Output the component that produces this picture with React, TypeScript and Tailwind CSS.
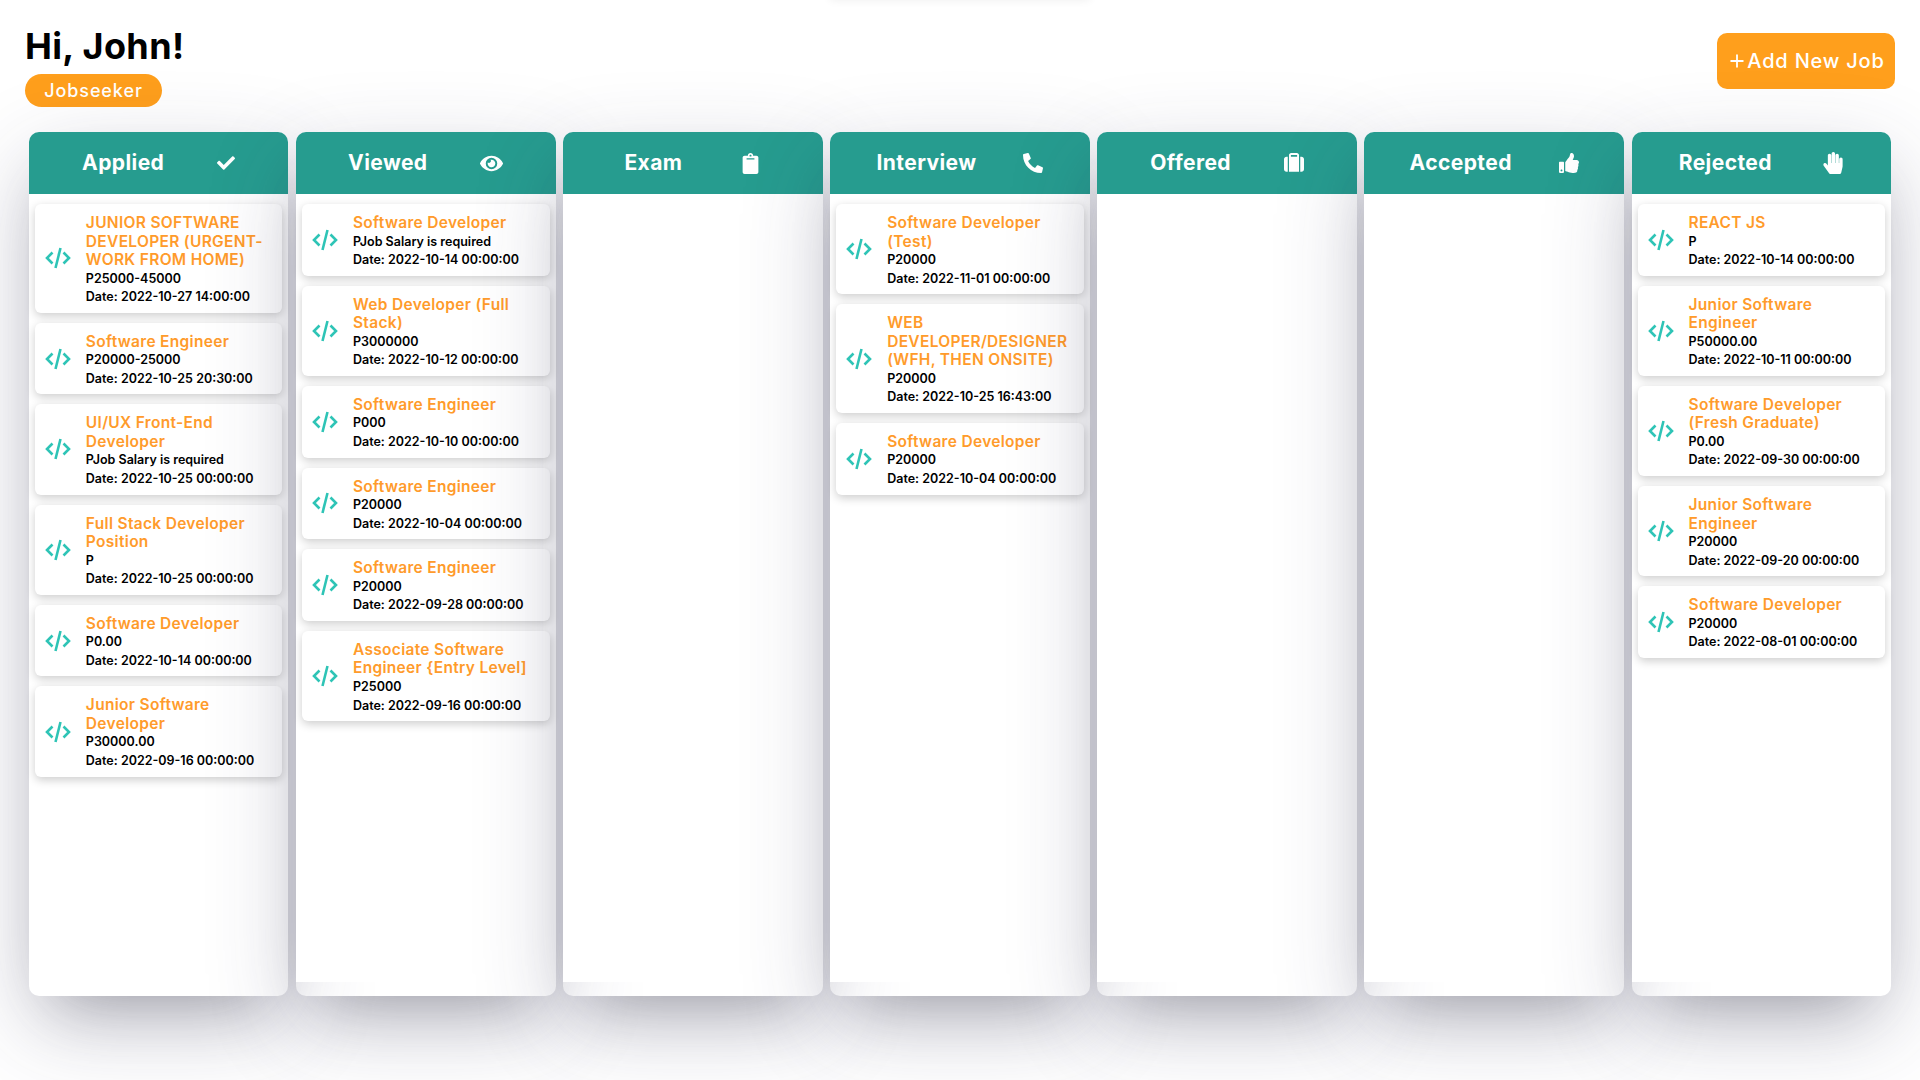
import React from 'react'
import { FaCheck, FaEye, FaClipboard, FaPhone, FaThumbsUp, FaHandPaper } from 'react-icons/fa'
import { FaSuitcase } from 'react-icons/fa6'
import { Plus } from 'lucide-react'

type Job = { title: string; salary: string; date: string }

const columns: { name: string; gap: string; icon: React.ReactNode; jobs: Job[] }[] = [
  {
    name: 'Applied',
    gap: 'gap-[53px]',
    icon: <FaCheck size={18} />,
    jobs: [
      { title: 'JUNIOR SOFTWARE DEVELOPER (URGENT- WORK FROM HOME)', salary: 'P25000-45000', date: '2022-10-27 14:00:00' },
      { title: 'Software Engineer', salary: 'P20000-25000', date: '2022-10-25 20:30:00' },
      { title: 'UI/UX Front-End Developer', salary: 'PJob Salary is required', date: '2022-10-25 00:00:00' },
      { title: 'Full Stack Developer Position', salary: 'P', date: '2022-10-25 00:00:00' },
      { title: 'Software Developer', salary: 'P0.00', date: '2022-10-14 00:00:00' },
      { title: 'Junior Software Developer', salary: 'P30000.00', date: '2022-09-16 00:00:00' },
    ],
  },
  {
    name: 'Viewed',
    gap: 'gap-[53px]',
    icon: <FaEye size={23} />,
    jobs: [
      { title: 'Software Developer', salary: 'PJob Salary is required', date: '2022-10-14 00:00:00' },
      { title: 'Web Developer (Full Stack)', salary: 'P3000000', date: '2022-10-12 00:00:00' },
      { title: 'Software Engineer', salary: 'P000', date: '2022-10-10 00:00:00' },
      { title: 'Software Engineer', salary: 'P20000', date: '2022-10-04 00:00:00' },
      { title: 'Software Engineer', salary: 'P20000', date: '2022-09-28 00:00:00' },
      { title: 'Associate Software Engineer {Entry Level]', salary: 'P25000', date: '2022-09-16 00:00:00' },
    ],
  },
  { name: 'Exam', gap: 'gap-[58px]', icon: <FaClipboard size={21} />, jobs: [] },
  {
    name: 'Interview',
    gap: 'gap-[47px]',
    icon: <FaPhone size={20} className="-scale-x-100" />,
    jobs: [
      { title: 'Software Developer (Test)', salary: 'P20000', date: '2022-11-01 00:00:00' },
      { title: 'WEB DEVELOPER/DESIGNER (WFH, THEN ONSITE)', salary: 'P20000', date: '2022-10-25 16:43:00' },
      { title: 'Software Developer', salary: 'P20000', date: '2022-10-04 00:00:00' },
    ],
  },
  { name: 'Offered', gap: 'gap-[53px]', icon: <FaSuitcase size={20} />, jobs: [] },
  { name: 'Accepted', gap: 'gap-[47px]', icon: <FaThumbsUp size={20} />, jobs: [] },
  {
    name: 'Rejected',
    gap: 'gap-[50px]',
    icon: <FaHandPaper size={22} />,
    jobs: [
      { title: 'REACT JS', salary: 'P', date: '2022-10-14 00:00:00' },
      { title: 'Junior Software Engineer', salary: 'P50000.00', date: '2022-10-11 00:00:00' },
      { title: 'Software Developer (Fresh Graduate)', salary: 'P0.00', date: '2022-09-30 00:00:00' },
      { title: 'Junior Software Engineer', salary: 'P20000', date: '2022-09-20 00:00:00' },
      { title: 'Software Developer', salary: 'P20000', date: '2022-08-01 00:00:00' },
    ],
  },
]

function CodeIcon() {
  return (
    <svg width="26" height="22" viewBox="0 0 26 22" fill="none" stroke="#2ec4b6" strokeWidth="2.6">
      <polyline points="7.5,5.5 2,11 7.5,16.5" />
      <polyline points="18.5,5.5 24,11 18.5,16.5" />
      <line x1="15.5" y1="1" x2="10.5" y2="21" />
    </svg>
  )
}

function JobCard({ job }: { job: Job }) {
  return (
    <div className="flex items-center rounded-md bg-white px-2 pt-[10px] pb-[6px] shadow-[0_3px_10px_rgba(0,0,0,0.2)]">
      <div className="mb-[4px] w-[43px] shrink-0 pl-[2px]">
        <CodeIcon />
      </div>
      <div className="min-w-0 flex-1">
        <div className="text-[15.5px] leading-[18.5px] font-semibold tracking-[0.02em] text-[#ff9b2b]">{job.title}</div>
        <div className="text-[12.5px] leading-[18.6px] font-semibold text-black">{job.salary}</div>
        <div className="text-[12.5px] leading-[18.6px] font-semibold text-black">Date: {job.date}</div>
      </div>
    </div>
  )
}

export default function App() {
  return (
    <div className="relative h-[1080px] overflow-hidden bg-white font-['Inter','Liberation_Sans',sans-serif]">
      {/* faint shadow of something sitting above the page */}
      <div className="absolute -top-[30px] left-[830px] h-[30px] w-[260px] shadow-[0_0_10px_rgba(0,0,0,0.07)]" />

      {/* Header */}
      <div className="flex items-start justify-between px-[25px] pt-[26px] pb-[25px]">
        <div>
          <h1 className="h-[48px] text-[36px] leading-[40px] font-bold tracking-[0.01em] text-black">Hi, John!</h1>
          <div className="flex h-[33px] w-[137px] items-center justify-center rounded-full bg-[#ff9f1c] text-[18px] font-medium tracking-[0.05em] text-white">
            Jobseeker
          </div>
        </div>
        <button className="mt-[7px] flex h-[56px] w-[178px] items-center justify-center rounded-[10px] bg-[#ff9f1c] text-[20px] font-medium tracking-[0.04em] text-white">
          <Plus size={20} strokeWidth={2.2} />
          Add New Job
        </button>
      </div>

      {/* Board */}
      <div className="flex gap-[7.47px] px-[28.85px]">
        {columns.map((col) => (
          <div
            key={col.name}
            className="h-[864px] flex-1 rounded-[10px] shadow-[0_30px_90px_rgba(50,50,93,0.24),0_30px_60px_-30px_rgba(0,0,0,0.3)]"
          >
            <div className={`flex h-[62px] items-center justify-center rounded-t-[10px] bg-[#269c8f] text-white ${col.gap}`}>
              <span className="text-[21px] font-bold tracking-[0.02em]">{col.name}</span>
              {col.icon}
            </div>
            <div className="flex h-[788px] flex-col gap-[10px] bg-white px-[6px] pt-[10px]">
              {col.jobs.map((job, i) => (
                <JobCard key={i} job={job} />
              ))}
            </div>
          </div>
        ))}
      </div>
    </div>
  )
}
